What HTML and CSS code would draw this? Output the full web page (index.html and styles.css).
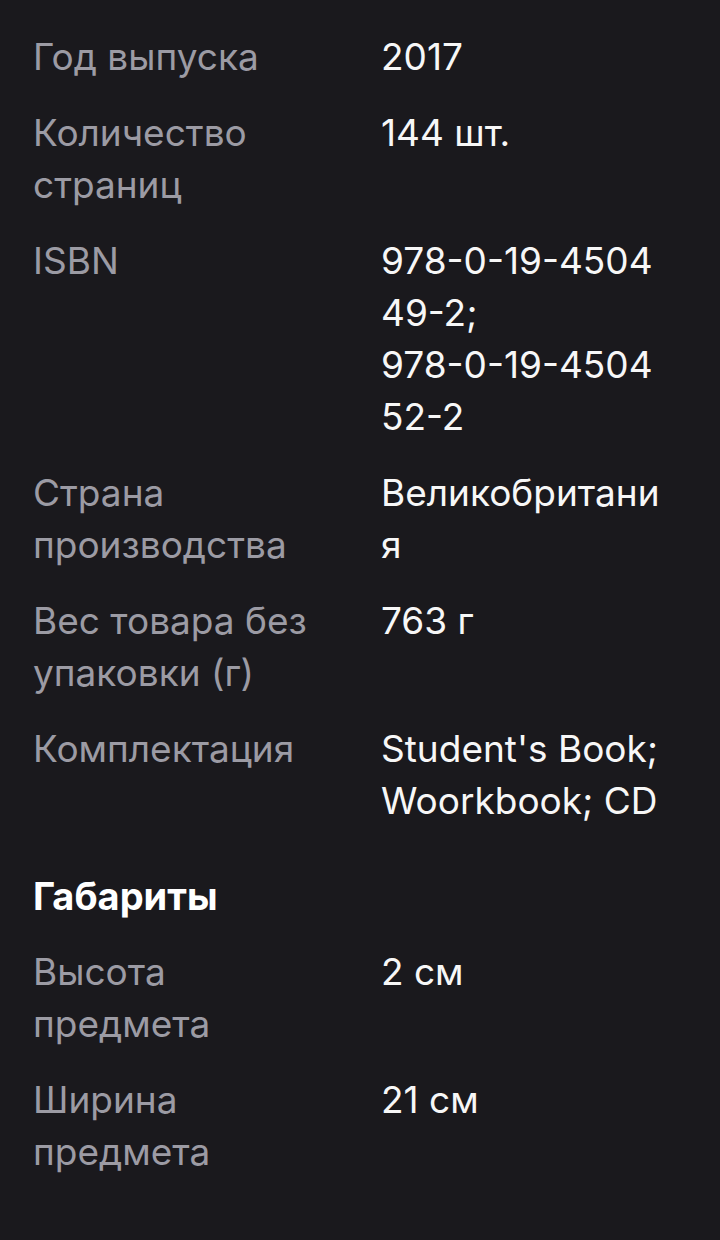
FILE: index.html
```html
<!DOCTYPE html>
<html lang="ru">
<head>
<meta charset="utf-8">
<link rel="stylesheet" href="styles.css">
</head>
<body>
<div class="page">
  <dl class="specs">
    <div class="row"><dt>Год выпуска</dt><dd>2017</dd></div>
    <div class="row"><dt>Количество страниц</dt><dd>144 шт.</dd></div>
    <div class="row"><dt>ISBN</dt><dd><span class="code">978-0-19-450449-2; </span><span class="code">978-0-19-450452-2</span></dd></div>
    <div class="row"><dt>Страна производства</dt><dd>Великобритания</dd></div>
    <div class="row"><dt>Вес товара без упаковки (г)</dt><dd>763 г</dd></div>
    <div class="row"><dt>Комплектация</dt><dd>Student's Book; Woorkbook; CD</dd></div>
  </dl>
  <h2 class="section-title">Габариты</h2>
  <dl class="specs">
    <div class="row"><dt>Высота предмета</dt><dd>2 см</dd></div>
    <div class="row"><dt>Ширина предмета</dt><dd>21 см</dd></div>
  </dl>
</div>
</body>
</html>
```

FILE: styles.css
```css
html, body {
  margin: 0;
  padding: 0;
  background: #1a191d;
}
body {
  font-family: Inter, "Noto Sans", sans-serif;
  font-size: 37px;
  line-height: 52px;
  width: 720px;
  height: 1240px;
  overflow: hidden;
}
.page {
  padding: 31px 33px 0 33px;
}
.specs {
  margin: 0;
  display: flex;
  flex-direction: column;
  gap: 24px;
}
.row {
  display: grid;
  grid-template-columns: 300px 286px;
  column-gap: 48px;
}
dt {
  color: #9c9ba4;
  margin: 0;
}
dd {
  color: #f7f7f7;
  margin: 0;
  overflow-wrap: anywhere;
}
.code {
  display: block;
  word-break: break-all;
}
.section-title {
  margin: 43px 0 24px;
  color: #ffffff;
  font-size: 38px;
  font-weight: 700;
  line-height: 52px;
}
```
